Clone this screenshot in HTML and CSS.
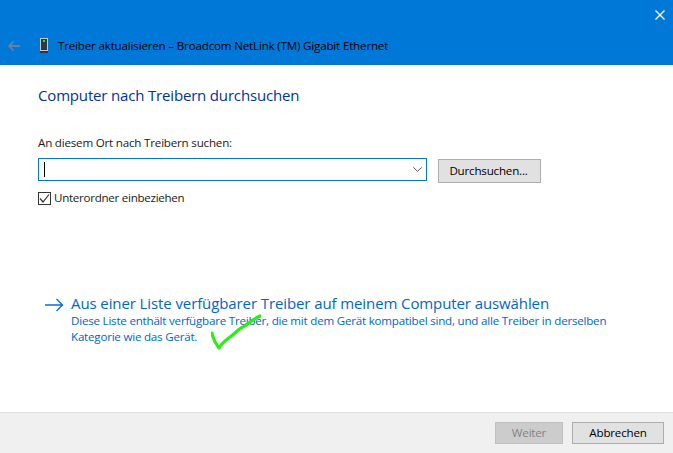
FILE: index.html
```html
<!DOCTYPE html>
<html lang="de">
<head>
<meta charset="utf-8">
<title>Treiber aktualisieren</title>
<link rel="stylesheet" href="styles.css">
</head>
<body>
<div class="window">
  <header class="header">
    <div class="titlebar">
      <svg class="close" width="10" height="10" viewBox="0 0 10 10"><path d="M.5.5l9 9M9.500.5l-9 9" stroke="#fff" stroke-width="1.300" fill="none"/></svg>
    </div>
    <div class="navbar">
      <svg class="back" width="12" height="10" viewBox="0 0 12 10"><path d="M5.500.5L1.200 5l4.300 4.500M1.200 5H12" stroke="#6a8199" stroke-width="1.800" fill="none"/></svg>
      <svg class="device" width="8" height="15" viewBox="0 0 8 15"><rect x="0" y="0" width="8" height="13" fill="#c4c8cc"/><rect x="1" y="1" width="6" height="11" fill="#33373a"/><rect x="3" y="2" width="2" height="2" fill="#2be22b"/><rect x="0" y="13" width="8" height="2" fill="#2b3640"/></svg>
      <span class="title">Treiber aktualisieren – Broadcom NetLink (TM) Gigabit Ethernet</span>
    </div>
  </header>
  <main class="content">
    <h1 class="heading">Computer nach Treibern durchsuchen</h1>
    <label class="label">An diesem Ort nach Treibern suchen:</label>
    <div class="path-row">
      <div class="combo">
        <span class="caret"></span>
        <svg width="9" height="5" viewBox="0 0 9 5"><path d="M.4.400L4.500 4.400 8.600.400" stroke="#555" stroke-width="1" fill="none"/></svg>
      </div>
      <button class="btn browse">Durchsuchen...</button>
    </div>
    <div class="check-row">
      <span class="checkbox"><svg width="11" height="11" viewBox="0 0 11 11"><path d="M1 5.500L4 9l6-7.500" stroke="#333" stroke-width="1.200" fill="none"/></svg></span>
      <span class="check-label">Unterordner einbeziehen</span>
    </div>
    <div class="link-block">
      <svg class="link-arrow" width="19" height="14" viewBox="0 0 19 14"><path d="M11.500 1l6 6-6 6M18 7H0" stroke="#0a6ed1" stroke-width="1.400" fill="none"/></svg>
      <div class="link-text">
        <div class="link-title">Aus einer Liste verfügbarer Treiber auf meinem Computer auswählen</div>
        <div class="link-desc">Diese Liste enthält verfügbare Treiber, die mit dem Gerät kompatibel sind, und alle Treiber in derselben Kategorie wie das Gerät.</div>
      </div>
    </div>
    <svg class="tick" width="50" height="38" viewBox="0 0 50 38"><path d="M1 19C2 25 5 30 8 34 10 30 15 26 19 23 24 20 27 15 32 13 37 10 42 5 49 2" stroke="#2cee14" stroke-width="3.200" fill="none" stroke-linecap="round" stroke-linejoin="round"/></svg>
  </main>
  <footer class="footer">
    <button class="btn next" disabled>Weiter</button>
    <button class="btn cancel">Abbrechen</button>
  </footer>
</div>
</body>
</html>
```

FILE: styles.css
```css
* { box-sizing: border-box; }
html, body { margin: 0; height: 100%; }
body { overflow: hidden; background: #fff; font-family: "Open Sans", "Noto Sans", sans-serif; font-size: 12px; color: #1a1a1a; }
.window { width: 673px; height: 453px; display: flex; flex-direction: column; }
.header { height: 65px; background: #0078d7; display: flex; flex-direction: column; flex: none; }
.titlebar { height: 32px; display: flex; justify-content: flex-end; padding: 10px 8px 0 0; flex: none; }
.close { display: block; }
.navbar { display: flex; align-items: center; height: 27px; padding-left: 8px; }
.back { margin-right: 20px; }
.device { margin-right: 10px; }
.title { color: #000; font-size: 11.600px; letter-spacing: -0.180px; white-space: nowrap; }
.content { position: relative; flex: 1; padding: 20px 0 0 38px; display: flex; flex-direction: column; }
.heading { margin: 0; font-size: 15px; font-weight: 400; line-height: 20px; color: #003399; letter-spacing: -0.170px; }
.label { margin-top: 30px; line-height: 16px; font-size: 11.600px; letter-spacing: -0.200px; }
.path-row { display: flex; align-items: flex-start; margin-top: 7px; }
.combo { width: 389px; height: 23px; border: 1px solid #0078d7; display: flex; align-items: center; justify-content: space-between; padding: 0 4px 0 5px; }
.caret { width: 1px; height: 15px; background: #000; }
.btn { font-family: inherit; font-size: 11.600px; letter-spacing: -0.200px; background: #e1e1e1; border: 1px solid #adadad; color: #000; padding: 0 0 2px; height: 24px; }
.browse { width: 103px; margin: 1px 0 0 11px; padding-right: 2px; }
.check-row { display: flex; align-items: center; margin-top: 9px; height: 13px; }
.checkbox { width: 13px; height: 13px; border: 1px solid #333; display: flex; align-items: center; justify-content: center; background: #fff; }
.check-label { margin-left: 3px; padding-bottom: 2px; font-size: 11.600px; letter-spacing: -0.280px; }
.link-block { display: flex; align-items: flex-start; margin-top: 88px; margin-left: 7px; }
.link-arrow { margin: 5px 7px 0 0; flex: none; }
.link-title { font-size: 15px; line-height: 20px; color: #0066cc; letter-spacing: -0.100px; white-space: nowrap; }
.link-desc { font-size: 11.600px; line-height: 16px; color: #0066cc; letter-spacing: -0.220px; width: 550px; }
.tick { position: absolute; left: 211px; top: 249px; }
.footer { height: 41px; flex: none; background: #f0f0f0; border-top: 1px solid #dfdfdf; display: flex; justify-content: flex-end; align-items: flex-start; gap: 9px; padding: 9px 9px 0 0; }
.next { width: 68px; height: 22px; background: #cccccc; border-color: #bfbfbf; color: #838383; }
.cancel { width: 92px; height: 22px; }
```
